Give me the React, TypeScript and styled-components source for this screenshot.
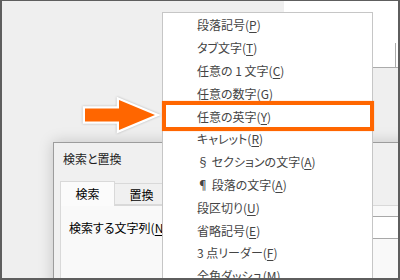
import React from "react";
import styled, { createGlobalStyle } from "styled-components";

const Global = createGlobalStyle`
  html, body { margin: 0; padding: 0; background: #ffffff; }
  body {
    font-family: "Noto Sans CJK JP", "Noto Sans", sans-serif;
    -webkit-font-smoothing: antialiased;
  }
`;

const Frame = styled.div`
  position: relative;
  width: 400px;
  height: 280px;
  box-sizing: border-box;
  border-style: solid;
  border-color: #5e5e5e;
  border-width: 1px 2px 2px 2px;
  background: #efefef;
  overflow: hidden;
`;

const BackWindow = styled.div`
  position: absolute;
  left: 282px;
  top: 0;
  width: 114px;
  height: 66px;
  background: #ffffff;
  border-bottom: 1px solid #ababab;
  &::after {
    content: "";
    position: absolute;
    right: 2px;
    top: 42px;
    bottom: 0;
    width: 1px;
    background: #ababab;
  }
`;

const Dialog = styled.div`
  position: absolute;
  left: 51px;
  top: 141px;
  width: 400px;
  height: 220px;
  box-sizing: border-box;
  background: #f0f0f0;
  border: 1px solid #9c9c9c;
  box-shadow: 0 0 14px rgba(0, 0, 0, 0.18);
  display: flex;
  flex-direction: column;
`;

const TitleBar = styled.div`
  height: 30px;
  display: flex;
  align-items: center;
  padding-left: 9px;
  font-size: 12px;
  color: #1e1e1e;
  font-feature-settings: "palt";
`;

const DialogBody = styled.div`
  padding: 8px 0 0 6px;
  display: flex;
  flex-direction: column;
`;

const TabRow = styled.div`
  display: flex;
  align-items: flex-end;
  position: relative;
  z-index: 1;
`;

const Tab = styled.div<{ $active?: boolean }>`
  box-sizing: border-box;
  width: ${(p) => (p.$active ? 55 : 60)}px;
  height: ${(p) => (p.$active ? 25 : 22)}px;
  margin-bottom: ${(p) => (p.$active ? -1 : 0)}px;
  display: flex;
  align-items: center;
  justify-content: center;
  font-size: 12px;
  color: #000;
  background: ${(p) => (p.$active ? "#fbfbfb" : "#f0f0f0")};
  border: 1px solid #d9d9d9;
  border-bottom: ${(p) => (p.$active ? "none" : "1px solid #d9d9d9")};
  padding-bottom: ${(p) => (p.$active ? 2 : 0)}px;
  ${(p) => (p.$active ? "" : "border-left: none; padding-right: 6px;")}
`;

const TabPanel = styled.div`
  border: 1px solid #d9d9d9;
  background: #f9f9f9;
  height: 120px;
  padding: 10px 0 0 8px;
`;

const FieldRow = styled.div`
  display: flex;
  align-items: center;
  height: 23px;
  gap: 10px;
`;

const Label = styled.span`
  font-size: 12px;
  color: #000;
  white-space: nowrap;
  font-feature-settings: "palt";
`;

const Input = styled.div`
  flex: 1;
  height: 23px;
  box-sizing: border-box;
  background: #ffffff;
  border: 1px solid #a8a8a8;
`;

const Menu = styled.div`
  position: absolute;
  left: 160px;
  top: 11px;
  width: 211px;
  height: 300px;
  box-sizing: border-box;
  background: #ffffff;
  border: 1px solid #c6c6c6;
  padding-top: 0.5px;
  z-index: 2;
`;

const MenuItem = styled.div<{ $marked?: boolean }>`
  position: relative;
  height: 22.8px;
  display: flex;
  align-items: center;
  padding-left: 34px;
  font-size: 12px;
  color: #444444;
  white-space: nowrap;
  font-feature-settings: "palt";
  ${(p) =>
    p.$marked
      ? `
  &::after {
    content: "";
    position: absolute;
    left: -1px;
    right: -2px;
    top: -3.7px;
    bottom: -3.5px;
    border: 4.5px solid #ff6600;
    box-shadow: 0 0 1px rgba(255, 120, 40, 0.6);
  }`
      : ""}
`;

const Key = styled.span`
  text-decoration: underline;
  text-underline-offset: 2px;
  text-decoration-thickness: 1px;
`;

const ArrowMark = styled.svg`
  position: absolute;
  left: 78px;
  top: 94px;
  width: 82px;
  height: 42px;
  z-index: 3;
  filter: drop-shadow(0 0 1px rgba(0, 0, 0, 0.25));
`;

type Entry = { label: string; key: string; marked?: boolean };

const entries: Entry[] = [
  { label: "段落記号", key: "P" },
  { label: "タブ文字", key: "T" },
  { label: "任意の 1 文字", key: "C" },
  { label: "任意の数字", key: "G" },
  { label: "任意の英字", key: "Y", marked: true },
  { label: "キャレット", key: "R" },
  { label: "§ セクションの文字", key: "A" },
  { label: "¶ 段落の文字", key: "A" },
  { label: "段区切り", key: "U" },
  { label: "省略記号", key: "E" },
  { label: "3 点リーダー", key: "F" },
  { label: "全角ダッシュ", key: "M" },
];

export default function App() {
  return (
    <>
      <Global />
      <Frame>
        <BackWindow />
        <Dialog>
          <TitleBar>検索と置換</TitleBar>
          <DialogBody>
            <TabRow>
              <Tab $active>検索</Tab>
              <Tab>置換</Tab>
            </TabRow>
            <TabPanel>
              <FieldRow>
                <Label>
                  検索する文字列(<Key>N</Key>):
                </Label>
                <Input />
              </FieldRow>
            </TabPanel>
          </DialogBody>
        </Dialog>
        <Menu>
          {entries.map((e, i) => (
            <MenuItem key={i} $marked={e.marked}>
              {e.label}(<Key>{e.key}</Key>)
            </MenuItem>
          ))}
        </Menu>
        <ArrowMark viewBox="80 95 82 42">
          <polygon
            points="85,108.5 119,108.5 119,100 155,115 119,130 119,121.5 85,121.5"
            fill="#ff6600"
            stroke="#ffffff"
            strokeWidth={4.5}
            strokeLinejoin="miter"
            strokeMiterlimit={3}
            paintOrder="stroke"
          />
        </ArrowMark>
      </Frame>
    </>
  );
}
